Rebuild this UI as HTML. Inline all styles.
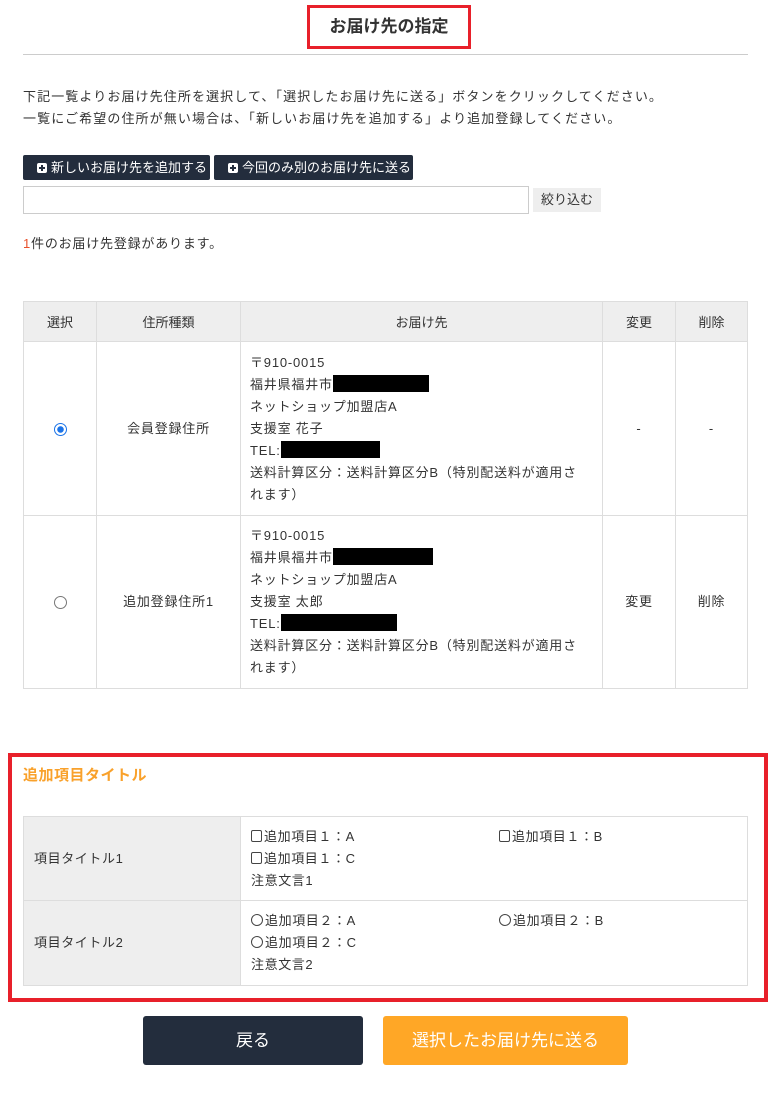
<!DOCTYPE html>
<html><head><meta charset="utf-8"><style>
*{box-sizing:border-box;margin:0;padding:0}
body{width:775px;height:1099px;background:#fff;font-family:"Liberation Sans","Noto Sans CJK JP",sans-serif;color:#333;font-size:13px;position:relative;overflow:hidden}
.abs{position:absolute}
.title{left:307px;top:5px;width:164px;height:44px;border:3px solid #e8202a;text-align:center;font-weight:bold;font-size:17px;line-height:38px;color:#333}
.hr{left:23px;top:54px;width:725px;height:1px;background:#ccc}
.p{left:23px;top:86px;line-height:22px;font-size:13px;letter-spacing:1.1px;white-space:nowrap}
.btn{top:155px;height:25px;background:#232d3d;color:#fff;font-size:13px;line-height:25px;padding-left:14px;border-radius:2px;white-space:nowrap}
.btn i{display:inline-block;width:10px;height:10px;background:#fff;border-radius:2px;position:relative;vertical-align:-1px;margin-right:4px}
.btn i:before{content:"";position:absolute;left:2px;top:4px;width:6px;height:2px;background:#232d3d}
.btn i:after{content:"";position:absolute;left:4px;top:2px;width:2px;height:6px;background:#232d3d}
table{border-collapse:collapse;position:absolute}
td,th{border:1px solid #ddd;font-weight:normal;font-size:13px}
.t1 th{background:#eee;height:40px;text-align:center}
.t1 td{text-align:center;line-height:22px;letter-spacing:0.8px}
.addr{text-align:left!important;padding:0 9px}
.blk{display:inline-block;background:#000;height:17px;vertical-align:-3px}
.radio{display:inline-block;width:13px;height:13px;border:1px solid #777;border-radius:50%;vertical-align:middle}
.radio.on{border:1px solid #1a73e8;background:radial-gradient(circle,#1a73e8 3px,#fff 3.5px)}
.red2{left:8px;top:753px;width:760px;height:249px;border:4px solid #e8202a}
.t2 td{line-height:22px;letter-spacing:0.6px}
.t2 td.h{background:#eee;padding-left:10px}
.cb{display:inline-block;width:11px;height:12px;border:1px solid #444;border-radius:2px;vertical-align:-1px;margin-right:2px}
.rb{display:inline-block;width:12px;height:12px;border:1px solid #444;border-radius:50%;vertical-align:-1px;margin-right:2px}
</style></head><body>
<div class="abs title">お届け先の指定</div>
<div class="abs hr"></div>
<div class="abs p">下記一覧よりお届け先住所を選択して、「選択したお届け先に送る」ボタンをクリックしてください。<br>一覧にご希望の住所が無い場合は、「新しいお届け先を追加する」より追加登録してください。</div>
<div class="abs btn" style="left:23px;width:187px"><i></i>新しいお届け先を追加する</div>
<div class="abs btn" style="left:214px;width:199px"><i></i>今回のみ別のお届け先に送る</div>
<div class="abs" style="left:23px;top:186px;width:506px;height:28px;border:1px solid #ccc"></div>
<div class="abs" style="left:533px;top:188px;width:68px;height:24px;background:#eee;line-height:24px;text-align:center">絞り込む</div>
<div class="abs" style="left:23px;top:234px;line-height:20px;letter-spacing:0.8px"><span style="color:#e8502a">1</span>件のお届け先登録があります。</div>
<table class="t1" style="left:23px;top:301px;width:725px">
<tr><th style="width:73px">選択</th><th style="width:144px">住所種類</th><th style="width:362px">お届け先</th><th style="width:73px">変更</th><th>削除</th></tr>
<tr style="height:174px"><td><span class="radio on"></span></td><td>会員登録住所</td><td class="addr">〒910-0015<br>福井県福井市<span class="blk" style="width:96px"></span><br>ネットショップ加盟店A<br>支援室 花子<br>TEL:<span class="blk" style="width:99px"></span><br>送料計算区分：送料計算区分B（特別配送料が適用さ<br>れます）</td><td>-</td><td>-</td></tr>
<tr style="height:173px"><td><span class="radio"></span></td><td>追加登録住所1</td><td class="addr">〒910-0015<br>福井県福井市<span class="blk" style="width:100px"></span><br>ネットショップ加盟店A<br>支援室 太郎<br>TEL:<span class="blk" style="width:116px"></span><br>送料計算区分：送料計算区分B（特別配送料が適用さ<br>れます）</td><td>変更</td><td>削除</td></tr>
</table>
<div class="abs red2"></div>
<div class="abs" style="left:23px;top:765px;color:#f9a12b;font-weight:bold;font-size:15px;line-height:22px;letter-spacing:0.5px">追加項目タイトル</div>
<table class="t2" style="left:23px;top:816px;width:725px">
<tr style="height:84px"><td class="h" style="width:217px">項目タイトル1</td><td style="padding-left:10px;position:relative"><div style="position:relative"><span class="cb"></span>追加項目１：A<span style="position:absolute;left:248px"><span class="cb"></span>追加項目１：B</span><br><span class="cb"></span>追加項目１：C<br>注意文言1</div></td></tr>
<tr style="height:85px"><td class="h">項目タイトル2</td><td style="padding-left:10px"><div style="position:relative"><span class="rb"></span>追加項目２：A<span style="position:absolute;left:248px"><span class="rb"></span>追加項目２：B</span><br><span class="rb"></span>追加項目２：C<br>注意文言2</div></td></tr>
</table>
<div class="abs" style="left:143px;top:1016px;width:220px;height:49px;background:#232d3d;color:#fff;font-size:17px;line-height:49px;text-align:center;border-radius:3px">戻る</div>
<div class="abs" style="left:383px;top:1016px;width:245px;height:49px;background:#ffa726;color:#fff;font-size:17px;line-height:49px;text-align:center;border-radius:3px">選択したお届け先に送る</div>
</body></html>
